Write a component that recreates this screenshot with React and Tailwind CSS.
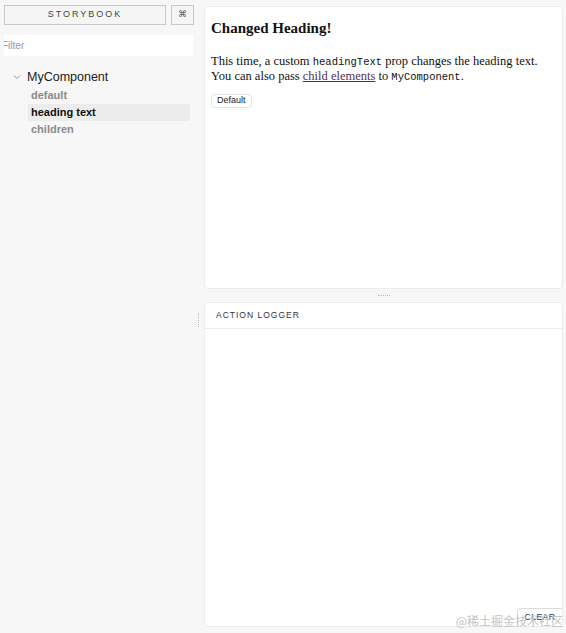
import React from 'react';

export default function App() {
  return (
    <div className="relative flex h-[633px] w-full overflow-hidden bg-[#f7f7f7] font-['Liberation_Sans',sans-serif]">
      {/* Sidebar */}
      <aside className="flex w-[198px] shrink-0 flex-col pl-1 pt-[5px]">
        <div className="flex gap-[5px]">
          <button className="flex h-5 w-[162px] items-center justify-center border border-[#c8c8c8] bg-[#f5f5f5] text-[9px] tracking-[2px] text-[#444]">
            STORYBOOK
          </button>
          <button className="flex h-5 w-[23px] items-center justify-center border border-[#c8c8c8] bg-[#f5f5f5] text-[9px] text-[#555]">
            ⌘
          </button>
        </div>
        <div className="mt-[10px] flex h-[21px] w-[189px] items-center overflow-hidden bg-white text-[10px] text-[#999]">
          <span className="-ml-[2px]">Filter</span>
        </div>
        <div className="mt-[12px] flex items-center">
          <svg className="ml-[9px] h-2 w-2" viewBox="0 0 8 8">
            <path d="M1 2.5 L4 5.5 L7 2.5" fill="none" stroke="#888" strokeWidth="0.9" />
          </svg>
          <span className="ml-[6px] text-[12.5px] text-[#222]">MyComponent</span>
        </div>
        <div className="flex flex-col pl-6 text-[11px] font-bold">
          <div className="flex h-[17px] items-center pl-[3px] text-[#8a8a8a]">default</div>
          <div className="flex h-[17px] w-[162px] items-center bg-[#ececec] pl-[3px] text-[#111]">heading text</div>
          <div className="flex h-[17px] items-center pl-[3px] text-[#8a8a8a]">children</div>
        </div>
      </aside>

      {/* Vertical handle */}
      <div className="flex w-[6px] shrink-0 flex-col justify-start pt-[313px]">
        <div className="h-[14px] w-px border-l border-dotted border-[#bbb]" />
      </div>

      {/* Right column */}
      <main className="flex flex-1 flex-col pb-[6px] pr-[3px] pt-[6px]">
        <section className="h-[283px] rounded border border-[#ececec] bg-white px-[6px] pt-[11px] font-['Liberation_Serif',serif] text-[#111]">
          <h2 className="text-[15px] font-bold leading-5">Changed Heading!</h2>
          <p className="mt-[16px] text-[12.5px] leading-[14px]">
            This time, a custom <code className="font-['Liberation_Mono',monospace] text-[10.5px]">headingText</code> prop changes the heading text.
            <br />
            You can also pass{' '}
            <a className="text-[#52324f] underline">child elements</a> to{' '}
            <code className="font-['Liberation_Mono',monospace] text-[10.5px]">MyComponent</code>.
          </p>
          <button className="mt-[10px] flex h-[14px] items-center rounded-sm border border-[#e4e4e4] bg-white px-[5px] font-['Liberation_Sans',sans-serif] text-[9px] text-[#222]">
            Default
          </button>
        </section>

        <div className="flex h-[13px] items-center justify-center">
          <div className="w-[12px] border-t border-dotted border-[#bbb]" />
        </div>

        <section className="relative flex flex-1 flex-col rounded border border-[#ececec] bg-white">
          <div className="flex h-[26px] items-center border-b border-[#ececec] pl-[11px] text-[8.5px] tracking-[1px] text-[#333]">
            ACTION LOGGER
          </div>
          <div className="flex-1" />
          <div className="flex justify-end">
            <button className="flex h-[18px] w-[45px] items-center justify-center rounded-tl border-l border-t border-[#dcdcdc] bg-white text-[8.5px] tracking-[0.5px] text-[#333]">
              CLEAR
            </button>
          </div>
        </section>
      </main>

      <div className="pointer-events-none absolute bottom-[3px] right-[3px] font-['Noto_Sans_CJK_SC',sans-serif] text-[12px] text-[#c4c4c4]">
        @稀土掘金技术社区
      </div>
    </div>
  );
}
